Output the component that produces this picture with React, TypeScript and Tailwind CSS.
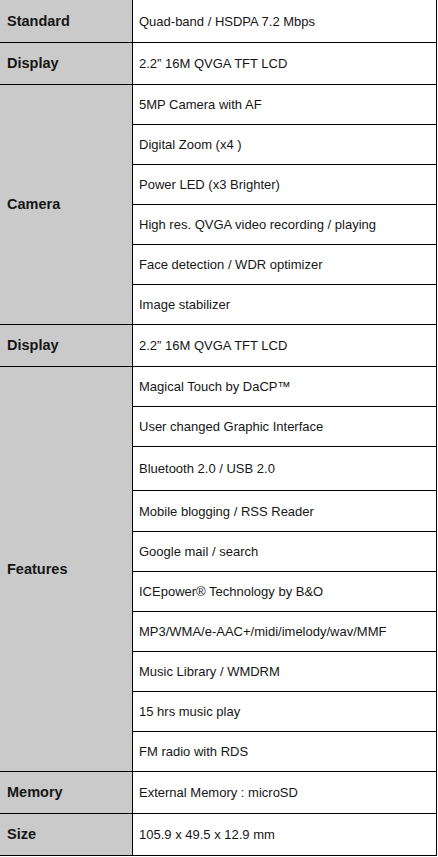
import React from "react";

type Group = { label: string; rows: { text: string; h: number }[] };

const groups: Group[] = [
  { label: "Standard", rows: [{ text: "Quad-band / HSDPA 7.2 Mbps", h: 43 }] },
  { label: "Display", rows: [{ text: "2.2\u201d 16M QVGA TFT LCD", h: 42 }] },
  {
    label: "Camera",
    rows: [
      { text: "5MP Camera with AF", h: 40 },
      { text: "Digital Zoom (x4 )", h: 40 },
      { text: "Power LED (x3 Brighter)", h: 40 },
      { text: "High res. QVGA video recording / playing", h: 40 },
      { text: "Face detection / WDR optimizer", h: 40 },
      { text: "Image stabilizer", h: 40 },
    ],
  },
  { label: "Display", rows: [{ text: "2.2\u201d 16M QVGA TFT LCD", h: 42 }] },
  {
    label: "Features",
    rows: [
      { text: "Magical Touch by DaCP\u2122", h: 40 },
      { text: "User changed Graphic Interface", h: 40 },
      { text: "Bluetooth 2.0 / USB 2.0", h: 44 },
      { text: "Mobile blogging / RSS Reader", h: 41 },
      { text: "Google mail / search", h: 40 },
      { text: "ICEpower\u00ae Technology by B&O", h: 40 },
      { text: "MP3/WMA/e-AAC+/midi/imelody/wav/MMF", h: 40 },
      { text: "Music Library / WMDRM", h: 40 },
      { text: "15 hrs music play", h: 40 },
      { text: "FM radio with RDS", h: 40 },
    ],
  },
  { label: "Memory", rows: [{ text: "External Memory : microSD", h: 42 }] },
  { label: "Size", rows: [{ text: "105.9 x 49.5 x 12.9 mm", h: 42 }] },
];

export default function App() {
  return (
    <div
      className="w-[438px] min-h-[857px] bg-white text-[#161616]"
      style={{ fontFamily: '"Liberation Sans", Arial, sans-serif' }}
    >
      <div className="w-[437px] flex flex-col">
        {groups.map((g, gi) => (
          <div key={gi} className="flex">
            <div className="w-[132px] shrink-0 bg-[#cacaca] flex items-center pl-[7px] pt-[1px] text-[14.5px] font-bold border-b border-black">
              {g.label}
            </div>
            <div className="flex-1 flex flex-col border-l border-r border-black">
              {g.rows.map((r, ri) => (
                <div
                  key={ri}
                  className="flex items-center pl-[6px] pt-[1px] text-[13px] border-b border-black box-border"
                  style={{ height: r.h }}
                >
                  {r.text}
                </div>
              ))}
            </div>
          </div>
        ))}
      </div>
    </div>
  );
}
